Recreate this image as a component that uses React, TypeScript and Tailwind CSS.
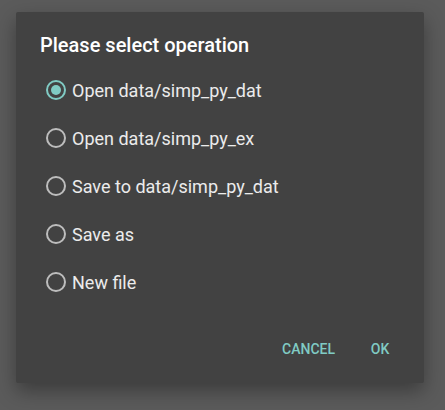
import { useState } from "react"

const options = [
  "Open data/simp_py_dat",
  "Open data/simp_py_ex",
  "Save to data/simp_py_dat",
  "Save as",
  "New file",
]

export default function App() {
  const [selected, setSelected] = useState(0)

  return (
    <div className="w-[445px] h-[410px] bg-[#5b5b5b] pt-3 pl-4 font-['Roboto',sans-serif] overflow-hidden">
      <div className="w-[408px] h-[371px] bg-[#424242] rounded-[2px] shadow-[0_8px_20px_rgba(0,0,0,0.35)] flex flex-col">
        <h1 className="pl-6 pt-[21px] text-[20px] leading-6 font-medium text-white">Please select operation</h1>
        <ul className="mt-[9px] flex flex-col">
          {options.map((opt, i) => (
            <li
              key={opt}
              onClick={() => setSelected(i)}
              className="h-12 flex items-center pl-[30px] cursor-pointer"
            >
              <span
                className={
                  "w-5 h-5 rounded-full border-2 flex items-center justify-center " +
                  (i === selected ? "border-[#80cbc4]" : "border-[#bdbdbd]")
                }
              >
                {i === selected && <span className="w-[10px] h-[10px] rounded-full bg-[#80cbc4]" />}
              </span>
              <span className="ml-[6px] text-[18px] text-white/90">{opt}</span>
            </li>
          ))}
        </ul>
        <div className="mt-auto flex justify-end pb-4 pr-3">
          <button className="h-9 px-2 text-[14px] font-medium text-[#80cbc4]">CANCEL</button>
          <button className="h-9 min-w-16 px-2 ml-[5px] text-[14px] font-medium text-[#80cbc4]">OK</button>
        </div>
      </div>
    </div>
  )
}
